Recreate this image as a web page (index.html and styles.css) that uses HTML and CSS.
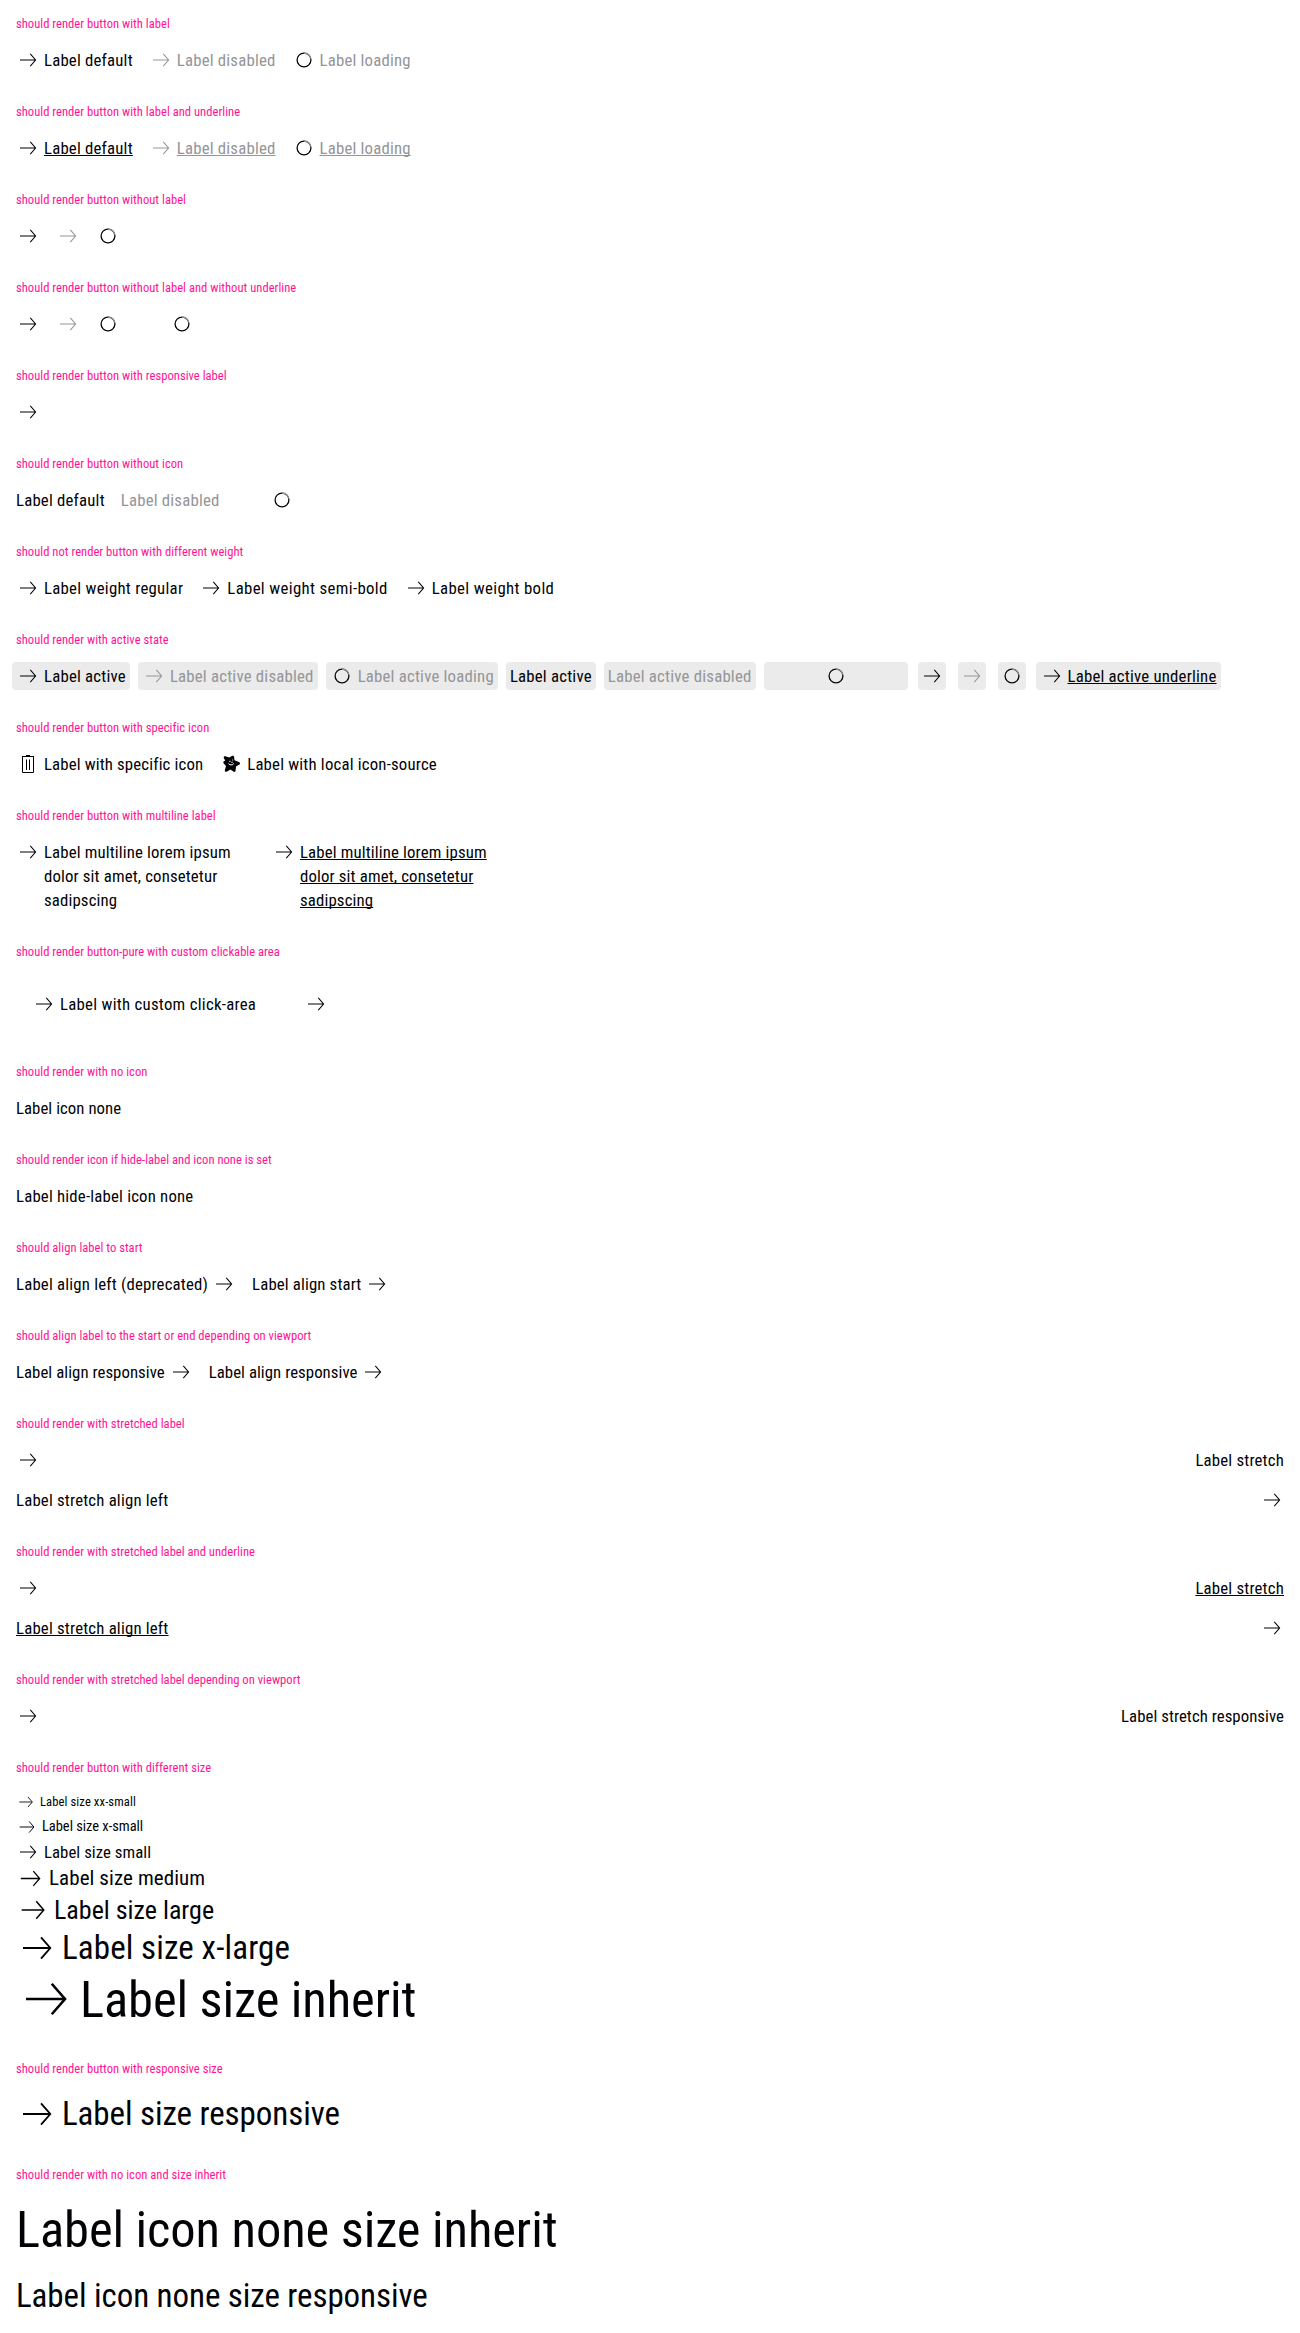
FILE: index.html
```html
<!DOCTYPE html>
<html lang="en">
<head>
<meta charset="utf-8">
<title>Button Pure</title>
<link rel="stylesheet" href="styles.css">
</head>
<body>
<svg class="sprite" aria-hidden="true">
  <symbol id="arrow" viewBox="0 0 24 24"><path d="M4 12h15.4M14.3 5.9l5.3 6.1-5.3 6.1" fill="none" stroke="currentColor" stroke-width="1.05"/></symbol>
  <symbol id="spinner" viewBox="0 0 24 24"><circle cx="12" cy="12" r="6.9" fill="none" stroke="#010205" stroke-width="1.3"/><path d="M12 5.1A6.9 6.9 0 0 1 18.7 10.4" fill="none" stroke="#949598" stroke-width="1.4"/></symbol>
  <symbol id="trash" viewBox="0 0 24 24"><path d="M6 4.5h12M10 3.5h4M6.500 5v15.500h11V5M10.500 7.500v10.500M13.500 7.500v10.500" fill="none" stroke="currentColor" stroke-width="1"/></symbol>
  <symbol id="star" viewBox="0 0 24 24"><path d="M6.300 4.200 10.300 5.500 13.300 3.800C14.500 3.500 15 4.200 15.100 5L15.500 8.300 20 10C21.400 10.700 21.300 12 20.300 12.600L17 14.600 16.600 18.600C16.400 20 15.300 20.400 14.300 19.600L11.500 17.600 8 19.600C6.500 20.300 5.500 19.300 5.900 18L7 14 4.600 11.200C4 10.300 4.300 9.400 5.400 9L6.200 8.500 4.800 6C4.400 4.900 5.200 4 6.300 4.200Z" fill="currentColor"/><path d="M10.300 9.300h1.200M13.200 7.800l.9.6M9.500 11.600l1.500 1.200h2.600l1-1.400M12.400 10.300h1.300" fill="none" stroke="#fff" stroke-width="1"/></symbol>
</svg>

<section><h2>should render button with label</h2><div class="row">
  <button><svg><use href="#arrow"/></svg><span>Label default</span></button>
  <button class="disabled"><svg><use href="#arrow"/></svg><span>Label disabled</span></button>
  <button class="disabled"><svg><use href="#spinner"/></svg><span>Label loading</span></button>
</div></section>

<section><h2>should render button with label and underline</h2><div class="row">
  <button class="underline"><svg><use href="#arrow"/></svg><span>Label default</span></button>
  <button class="underline disabled"><svg><use href="#arrow"/></svg><span>Label disabled</span></button>
  <button class="underline disabled"><svg><use href="#spinner"/></svg><span>Label loading</span></button>
</div></section>

<section><h2>should render button without label</h2><div class="row">
  <button><svg><use href="#arrow"/></svg></button>
  <button class="disabled"><svg><use href="#arrow"/></svg></button>
  <button><svg><use href="#spinner"/></svg></button>
</div></section>

<section><h2>should render button without label and without underline</h2><div class="row">
  <button><svg><use href="#arrow"/></svg></button>
  <button class="disabled"><svg><use href="#arrow"/></svg></button>
  <button><svg><use href="#spinner"/></svg></button>
  <button class="loading"><svg><use href="#spinner"/></svg></button>
</div></section>

<section><h2>should render button with responsive label</h2><div class="row">
  <button><svg><use href="#arrow"/></svg></button>
</div></section>

<section><h2>should render button without icon</h2><div class="row">
  <button><span>Label default</span></button>
  <button class="disabled"><span>Label disabled</span></button>
  <button class="loading"><svg><use href="#spinner"/></svg></button>
</div></section>

<section><h2>should not render button with different weight</h2><div class="row">
  <button class="regular"><svg><use href="#arrow"/></svg><span>Label weight regular</span></button>
  <button class="wide"><svg><use href="#arrow"/></svg><span>Label weight semi-bold</span></button>
  <button class="wide"><svg><use href="#arrow"/></svg><span>Label weight bold</span></button>
</div></section>

<section><h2>should render with active state</h2><div class="row">
  <button class="active"><svg><use href="#arrow"/></svg><span>Label active</span></button>
  <button class="active disabled"><svg><use href="#arrow"/></svg><span>Label active disabled</span></button>
  <button class="active disabled"><svg><use href="#spinner"/></svg><span>Label active loading</span></button>
  <button class="active"><span>Label active</span></button>
  <button class="active disabled"><span>Label active disabled</span></button>
  <button class="active loading-active"><svg><use href="#spinner"/></svg></button>
  <button class="active icon-only"><svg><use href="#arrow"/></svg></button>
  <button class="active icon-only disabled"><svg><use href="#arrow"/></svg></button>
  <button class="active icon-only"><svg><use href="#spinner"/></svg></button>
  <button class="active underline"><svg><use href="#arrow"/></svg><span>Label active underline</span></button>
</div></section>

<section><h2>should render button with specific icon</h2><div class="row">
  <button class="snug"><svg><use href="#trash"/></svg><span>Label with specific icon</span></button>
  <button><svg><use href="#star"/></svg><span>Label with local icon-source</span></button>
</div></section>

<section><h2>should render button with multiline label</h2><div class="row">
  <button class="multiline"><svg><use href="#arrow"/></svg><span>Label multiline lorem ipsum dolor sit amet, consetetur sadipscing</span></button>
  <button class="multiline underline"><svg><use href="#arrow"/></svg><span>Label multiline lorem ipsum dolor sit amet, consetetur sadipscing</span></button>
</div></section>

<section><h2>should render button-pure with custom clickable area</h2><div class="row">
  <button class="padded"><svg><use href="#arrow"/></svg><span>Label with custom click-area</span></button>
  <button class="padded"><svg><use href="#arrow"/></svg></button>
</div></section>

<section><h2>should render with no icon</h2><div class="row">
  <button class="tight"><span>Label icon none</span></button>
</div></section>

<section><h2>should render icon if hide-label and icon none is set</h2><div class="row">
  <button><span>Label hide-label icon none</span></button>
</div></section>

<section><h2>should align label to start</h2><div class="row">
  <button><span>Label align left (deprecated)</span><svg><use href="#arrow"/></svg></button>
  <button class="snug"><span>Label align start</span><svg><use href="#arrow"/></svg></button>
</div></section>

<section><h2>should align label to the start or end depending on viewport</h2><div class="row">
  <button class="tight"><span>Label align responsive</span><svg><use href="#arrow"/></svg></button>
  <button class="tight"><span>Label align responsive</span><svg><use href="#arrow"/></svg></button>
</div></section>

<section><h2>should render with stretched label</h2><div class="column">
  <button class="stretch"><svg><use href="#arrow"/></svg><span>Label stretch</span></button>
  <button class="stretch"><span>Label stretch align left</span><svg><use href="#arrow"/></svg></button>
</div></section>

<section><h2>should render with stretched label and underline</h2><div class="column">
  <button class="stretch underline"><svg><use href="#arrow"/></svg><span>Label stretch</span></button>
  <button class="stretch underline"><span>Label stretch align left</span><svg><use href="#arrow"/></svg></button>
</div></section>

<section><h2>should render with stretched label depending on viewport</h2><div class="column">
  <button class="stretch tight"><svg><use href="#arrow"/></svg><span>Label stretch responsive</span></button>
</div></section>

<section><h2>should render button with different size</h2><div class="sizes">
  <button class="xx-small"><svg><use href="#arrow"/></svg><span>Label size xx-small</span></button>
  <button class="x-small"><svg><use href="#arrow"/></svg><span>Label size x-small</span></button>
  <button class="tight"><svg><use href="#arrow"/></svg><span>Label size small</span></button>
  <button class="medium"><svg><use href="#arrow"/></svg><span>Label size medium</span></button>
  <button class="large"><svg><use href="#arrow"/></svg><span>Label size large</span></button>
  <button class="x-large"><svg><use href="#arrow"/></svg><span>Label size x-large</span></button>
  <button class="inherit"><svg><use href="#arrow"/></svg><span>Label size inherit</span></button>
</div></section>

<section><h2>should render button with responsive size</h2><div class="row">
  <button class="x-large responsive"><svg><use href="#arrow"/></svg><span>Label size responsive</span></button>
</div></section>

<section><h2>should render with no icon and size inherit</h2><div class="column">
  <button class="inherit"><span>Label icon none size inherit</span></button>
  <button class="x-large responsive"><span>Label icon none size responsive</span></button>
</div></section>
</body>
</html>
```
FILE: styles.css
```css
* { box-sizing: border-box; }

body {
  margin: 0;
  background: #fff;
  color: #010205;
  font-family: "Roboto Condensed", Roboto, sans-serif;
  font-stretch: 75%;
}

.sprite { display: none; }

section { padding: 16px; }

h2 {
  margin: 0 0 16px;
  color: #ff1493;
  font-size: 12.6px;
  font-weight: 400;
  line-height: 16px;
  letter-spacing: .01px;
}

.row { display: flex; align-items: flex-start; gap: 16px; }
.column { display: flex; flex-direction: column; align-items: flex-start; gap: 16px; }
.sizes { display: flex; flex-direction: column; align-items: flex-start; }

button {
  --size: 24px;
  display: flex;
  align-items: flex-start;
  gap: 4px;
  margin: 0;
  padding: 0;
  border: 0;
  background: none;
  color: inherit;
  font: inherit;
  font-size: 16.8px;
  line-height: var(--size);
  letter-spacing: .19px;
  text-align: left;
  white-space: nowrap;
}

button svg { flex: none; display: block; width: var(--size); height: var(--size); }

.regular { letter-spacing: .27px; }
.wide { letter-spacing: .35px; }
.snug { letter-spacing: .14px; }
.tight { letter-spacing: .05px; }
.disabled { color: #949598; }
.underline span { text-decoration: underline 1px; text-underline-offset: 1px; text-decoration-skip-ink: none; }
.loading { width: 92px; justify-content: center; }

.active { margin: -2px -4px; padding: 2px 4px; border-radius: 4px; background: #ebebeb; letter-spacing: .205px; }
.icon-only { margin: -2px; padding: 2px; }
.loading-active { width: 144px; justify-content: center; }

.multiline { width: 240px; white-space: normal; letter-spacing: .14px; }
.padded { padding: 16px; letter-spacing: .27px; }
.stretch { width: 100%; justify-content: space-between; }

.xx-small { --size: 20px; margin-bottom: 4px; font-size: 12.6px; letter-spacing: .1px; }
.x-small { --size: 22px; margin-bottom: 2px; font-size: 14.5px; letter-spacing: -.04px; }
.medium { --size: 29px; font-size: 21px; letter-spacing: .08px; }
.large { --size: 34px; font-size: 26px; letter-spacing: 0; }
.x-large { --size: 42px; font-size: 33px; letter-spacing: .12px; }
.responsive { letter-spacing: -.07px; }
.inherit { --size: 60px; font-size: 50.5px; letter-spacing: -.07px; }
.inherit span { margin-bottom: -2px; line-height: 62px; }
```
